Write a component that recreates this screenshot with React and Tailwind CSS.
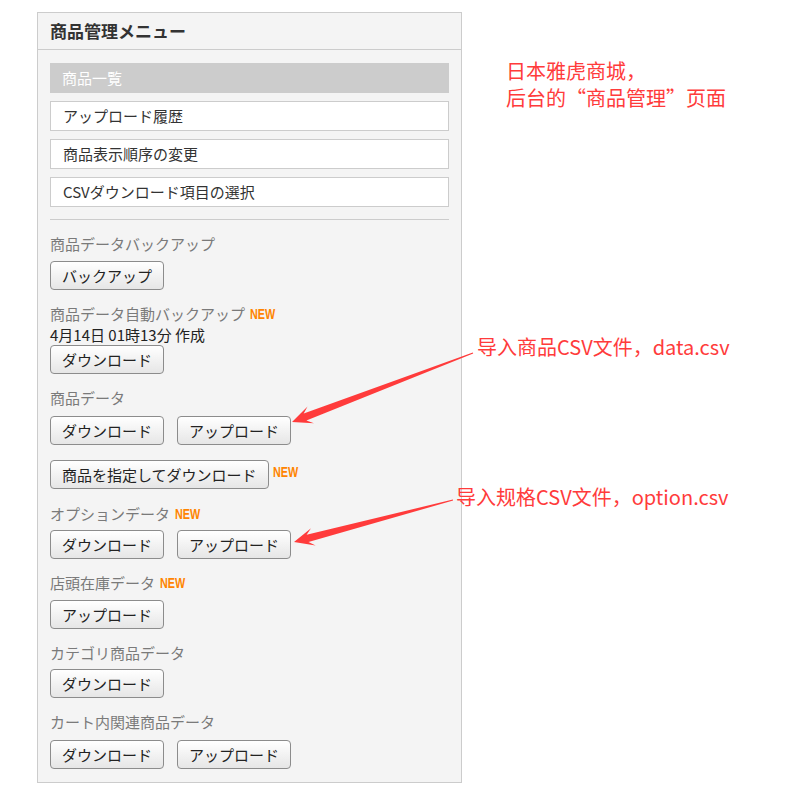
import React from "react";

const jp = { fontFamily: '"Noto Sans CJK JP", "Noto Sans", sans-serif' };
const sc = { fontFamily: '"Noto Sans CJK SC", "Noto Sans", sans-serif' };

function arrowPoints(S, T) {
  const dx = T[0] - S[0];
  const dy = T[1] - S[1];
  const L = Math.hypot(dx, dy);
  const ux = dx / L, uy = dy / L;
  const nx = -uy, ny = ux;
  const P = (d, w) => [S[0] + ux * d + nx * w, S[1] + uy * d + ny * w];
  const pts = [
    P(0, 0.5),
    P(L - 14, 3.8),
    P(L - 20, 9),
    T,
    P(L - 20, -9),
    P(L - 14, -3.8),
    P(0, -0.5),
  ];
  return pts.map((p) => p.map((v) => v.toFixed(1)).join(",")).join(" ");
}

function Btn({ children, className = "" }) {
  return (
    <button
      className={
        "h-[29px] px-[11px] rounded-[4px] border border-[#8c8c8c] bg-gradient-to-b from-white to-[#e6e6e6] text-[15px] leading-none text-[#222] whitespace-nowrap " +
        className
      }
      style={jp}
    >
      {children}
    </button>
  );
}

function New({ className = "" }) {
  return (
    <span className={"inline-flex items-center w-[25px] h-[14px] overflow-visible " + className}>
      <span
        className="block origin-left scale-x-[0.72] text-[15px] leading-[14px] font-bold text-[#ff8400] whitespace-nowrap"
        style={{ fontFamily: '"Liberation Sans", Arial, sans-serif' }}
      >
        NEW
      </span>
    </span>
  );
}

function Label({ children }) {
  return (
    <div className="h-[20px] leading-[20px] text-[15px] text-[#7a7a7a] flex items-center" style={jp}>
      {children}
    </div>
  );
}

export default function App() {
  return (
    <div className="relative w-[802px] h-[796px] bg-white overflow-hidden">
      <div className="ml-[37px] pt-[12px]">
        <div className="w-[425px] border border-[#cccccc] bg-[#f4f4f4]" style={jp}>
          <div className="h-[37px] border-b border-[#cccccc] pl-[12px] flex items-center">
            <span className="text-[17px] font-bold text-[#333]">商品管理メニュー</span>
          </div>
          <div className="px-[12px] pt-[13px] pb-[13px]">
            <div className="flex flex-col gap-[8px]">
              <div className="h-[30px] bg-[#cccccc] pl-[12px] flex items-center text-[15px] text-white">商品一覧</div>
              <div className="h-[30px] bg-white border border-[#cccccc] pl-[12px] flex items-center text-[15px] text-[#333]">アップロード履歴</div>
              <div className="h-[30px] bg-white border border-[#cccccc] pl-[12px] flex items-center text-[15px] text-[#333]">商品表示順序の変更</div>
              <div className="h-[30px] bg-white border border-[#cccccc] pl-[12px] flex items-center text-[15px] text-[#333]">CSVダウンロード項目の選択</div>
            </div>
            <div className="mt-[12px] border-t border-[#cccccc]" />

            <div className="mt-[14px]">
              <Label>商品データバックアップ</Label>
              <div className="mt-[7px] flex">
                <Btn>バックアップ</Btn>
              </div>
            </div>

            <div className="mt-[14px]">
              <Label>
                商品データ自動バックアップ<New className="ml-[5px]" />
              </Label>
              <div className="h-[21px] leading-[21px] text-[15px] text-[#222]">4月14日 01時13分 作成</div>
              <div className="flex">
                <Btn>ダウンロード</Btn>
              </div>
            </div>

            <div className="mt-[14px]">
              <Label>商品データ</Label>
              <div className="mt-[8px] flex gap-[13px]">
                <Btn>ダウンロード</Btn>
                <Btn>アップロード</Btn>
              </div>
              <div className="mt-[15px] flex items-start">
                <Btn>商品を指定してダウンロード</Btn>
                <New className="ml-[4px] mt-[5px]" />
              </div>
            </div>

            <div className="mt-[15px]">
              <Label>
                オプションデータ<New className="ml-[5px]" />
              </Label>
              <div className="mt-[6px] flex gap-[13px]">
                <Btn>ダウンロード</Btn>
                <Btn>アップロード</Btn>
              </div>
            </div>

            <div className="mt-[14px]">
              <Label>
                店頭在庫データ<New className="ml-[5px]" />
              </Label>
              <div className="mt-[7px] flex">
                <Btn>アップロード</Btn>
              </div>
            </div>

            <div className="mt-[14px]">
              <Label>カテゴリ商品データ</Label>
              <div className="mt-[6px] flex">
                <Btn>ダウンロード</Btn>
              </div>
            </div>

            <div className="mt-[14px]">
              <Label>カート内関連商品データ</Label>
              <div className="mt-[8px] flex gap-[13px]">
                <Btn>ダウンロード</Btn>
                <Btn>アップロード</Btn>
              </div>
            </div>
          </div>
        </div>
      </div>

      {/* annotations */}
      <div className="absolute left-[506px] top-[57px] text-[20px] leading-[27px] text-[#ff3b3b]" style={sc}>
        <div>日本雅虎商城，</div>
        <div>后台的“商品管理”页面</div>
      </div>
      <div className="absolute left-[477px] top-[333px] text-[20px] leading-[28px] text-[#ff3b3b] whitespace-nowrap" style={sc}>
        导入商品CSV文件，data.csv
      </div>
      <div className="absolute left-[456px] top-[483px] text-[20px] leading-[28px] text-[#ff3b3b] whitespace-nowrap" style={sc}>
        导入规格CSV文件，option.csv
      </div>
      <svg className="absolute left-0 top-0 pointer-events-none" width="802" height="796">
        <polygon points={arrowPoints([473, 353], [292, 422])} fill="#ff3b3b" />
        <polygon points={arrowPoints([453, 500], [294, 542])} fill="#ff3b3b" />
      </svg>
    </div>
  );
}
